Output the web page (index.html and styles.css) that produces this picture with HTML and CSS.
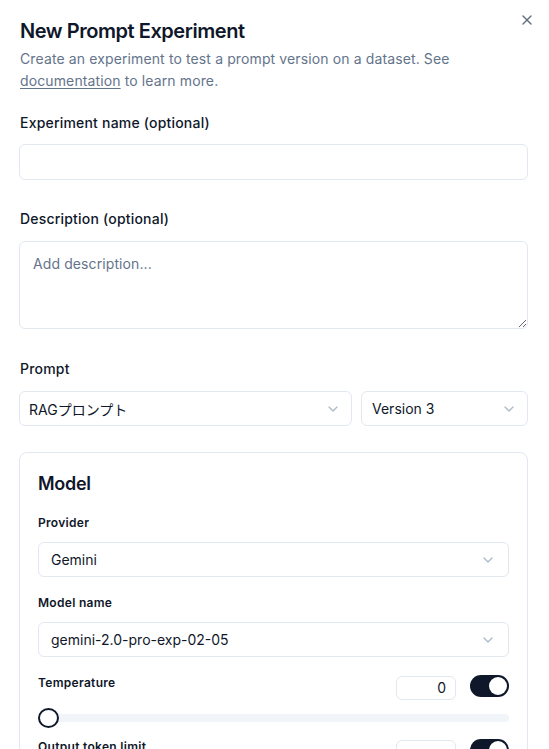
FILE: index.html
```html
<!DOCTYPE html>
<html lang="en">
<head>
<meta charset="utf-8">
<title>New Prompt Experiment</title>
<link rel="stylesheet" href="styles.css">
</head>
<body>
<div class="dialog">
  <button class="close" aria-label="Close">
    <svg width="16" height="16" viewBox="0 0 24 24" fill="none" stroke="currentColor" stroke-width="2" stroke-linecap="round" stroke-linejoin="round"><path d="M18 6 6 18"/><path d="m6 6 12 12"/></svg>
  </button>
  <header class="head">
    <h2 class="title">New Prompt Experiment</h2>
    <p class="subtitle">Create an experiment to test a prompt version on a dataset. See <a href="#" class="link">documentation</a> to learn more.</p>
  </header>

  <div class="field field-name">
    <label class="label">Experiment name (optional)</label>
    <input class="input" type="text">
  </div>

  <div class="field field-desc">
    <label class="label">Description (optional)</label>
    <textarea class="textarea" placeholder="Add description..."></textarea>
  </div>

  <div class="field field-prompt">
    <label class="label">Prompt</label>
    <div class="prompt-row">
      <div class="select select-prompt"><span>RAGプロンプト</span><svg class="chev" width="16" height="16" viewBox="0 0 24 24" fill="none" stroke="currentColor" stroke-width="2" stroke-linecap="round" stroke-linejoin="round"><path d="m6 9 6 6 6-6"/></svg></div>
      <div class="select select-version"><span>Version 3</span><svg class="chev" width="16" height="16" viewBox="0 0 24 24" fill="none" stroke="currentColor" stroke-width="2" stroke-linecap="round" stroke-linejoin="round"><path d="m6 9 6 6 6-6"/></svg></div>
    </div>
  </div>

  <section class="card">
    <h3 class="card-title">Model</h3>

    <div class="sub-field sf-provider">
      <label class="sub-label">Provider</label>
      <div class="select select-card"><span>Gemini</span><svg class="chev" width="16" height="16" viewBox="0 0 24 24" fill="none" stroke="currentColor" stroke-width="2" stroke-linecap="round" stroke-linejoin="round"><path d="m6 9 6 6 6-6"/></svg></div>
    </div>

    <div class="sub-field sf-model">
      <label class="sub-label">Model name</label>
      <div class="select select-card"><span>gemini-2.0-pro-exp-02-05</span><svg class="chev" width="16" height="16" viewBox="0 0 24 24" fill="none" stroke="currentColor" stroke-width="2" stroke-linecap="round" stroke-linejoin="round"><path d="m6 9 6 6 6-6"/></svg></div>
    </div>

    <div class="param">
      <div class="param-row">
        <span class="sub-label">Temperature</span>
        <div class="param-controls">
          <div class="num">0</div>
          <div class="switch"><span class="knob"></span></div>
        </div>
      </div>
      <div class="slider"><div class="track"></div><span class="thumb"></span></div>
    </div>

    <div class="param param-next">
      <div class="param-row">
        <span class="sub-label">Output token limit</span>
        <div class="param-controls">
          <div class="num"></div>
          <div class="switch"><span class="knob"></span></div>
        </div>
      </div>
    </div>
  </section>
</div>
</body>
</html>
```

FILE: styles.css
```css
* { box-sizing: border-box; }
html, body { margin: 0; padding: 0; background: #ffffff; }
body {
  font-family: Inter, "Noto Sans CJK JP", "Liberation Sans", sans-serif;
  color: #0f172a;
  overflow: hidden;
}
.dialog {
  position: relative;
  padding: 17px 21px 0 19px;
  height: 749px;
  overflow: hidden;
}
.close {
  position: absolute;
  top: 12px;
  right: 14px;
  width: 16px;
  height: 16px;
  padding: 0;
  border: 0;
  background: transparent;
  color: #475569;
  opacity: 0.85;
  display: flex;
}
.head { display: flex; flex-direction: column; gap: 3px; padding-left: 1px; }
.title {
  margin: 0;
  font-size: 20px;
  line-height: 28px;
  font-weight: 600;
  letter-spacing: -0.45px;
}
.subtitle {
  margin: 0;
  font-size: 14px;
  line-height: 22px;
  color: #64748b;
  letter-spacing: 0.12px;
}
.link { color: #64748b; text-decoration: underline; text-underline-offset: 2px; }

.field { display: flex; flex-direction: column; }
.field-name { margin-top: 21px; gap: 11px; }
.field-desc { margin-top: 29px; gap: 12px; }
.field-prompt { margin-top: 30px; gap: 12px; }
.label {
  font-size: 14px;
  line-height: 20px;
  font-weight: 500;
  padding-left: 1px;
  letter-spacing: 0.2px;
}
.input {
  height: 36px;
  border: 1px solid #e2e8f0;
  border-radius: 6px;
  font: inherit;
  padding: 0 12px;
}
.textarea {
  height: 88px;
  border: 1px solid #e2e8f0;
  border-radius: 6px;
  font-family: inherit;
  font-size: 14px;
  line-height: 20px;
  padding: 12px 13px;
  resize: vertical;
  color: #0f172a;
  letter-spacing: 0.1px;
}
.textarea::placeholder { color: #64748b; }

.prompt-row { display: flex; gap: 9px; }
.select {
  height: 35px;
  border: 1px solid #e2e8f0;
  border-radius: 6px;
  display: flex;
  align-items: center;
  justify-content: space-between;
  font-size: 14px;
  padding: 0 10px 0 9px;
  background: #fff;
}
.select-prompt { flex: 0 0 333px; }
.select-version { flex: 1; padding-left: 10px; }
.chev { color: #94a3b8; opacity: 0.75; flex: none; }

.card {
  margin-top: 26px;
  border: 1px solid #e2e8f0;
  border-radius: 8px;
  padding: 17px 18px 40px;
  display: flex;
  flex-direction: column;
}
.card-title {
  margin: 0;
  font-size: 18px;
  line-height: 28px;
  font-weight: 600;
  letter-spacing: -0.3px;
}
.sub-field { display: flex; flex-direction: column; gap: 11px; }
.sf-provider { margin-top: 17px; }
.sf-model { margin-top: 18px; }
.sub-label {
  font-size: 12px;
  line-height: 16px;
  font-weight: 600;
  letter-spacing: 0.3px;
}
.select-card { padding: 0 12px 0 12px; }

.param { margin-top: 18px; display: flex; flex-direction: column; }
.param-next { margin-top: 11px; }
.param-row { display: flex; justify-content: space-between; align-items: flex-start; }
.param-controls { display: flex; align-items: flex-start; gap: 14px; }
.num {
  margin-top: 1px;
  width: 60px;
  height: 24px;
  border: 1px solid #e2e8f0;
  border-radius: 6px;
  font-size: 14px;
  line-height: 22px;
  text-align: right;
  padding-right: 9px;
}
.switch {
  width: 39px;
  height: 22px;
  border-radius: 11px;
  background: #0f172a;
  display: flex;
  align-items: center;
  justify-content: flex-end;
  padding: 2px;
}
.knob {
  width: 18px;
  height: 18px;
  border-radius: 50%;
  background: #fff;
  box-shadow: 0 1px 3px rgba(0,0,0,0.15);
}
.slider {
  position: relative;
  margin-top: 8px;
  height: 20px;
  display: flex;
  align-items: center;
}
.track {
  flex: 1;
  height: 8px;
  border-radius: 4px;
  background: #f1f5f9;
}
.thumb {
  position: absolute;
  left: 0;
  top: 0;
  width: 21px;
  height: 20px;
  border: 2px solid #0f172a;
  border-radius: 50%;
  background: #fff;
}
```
